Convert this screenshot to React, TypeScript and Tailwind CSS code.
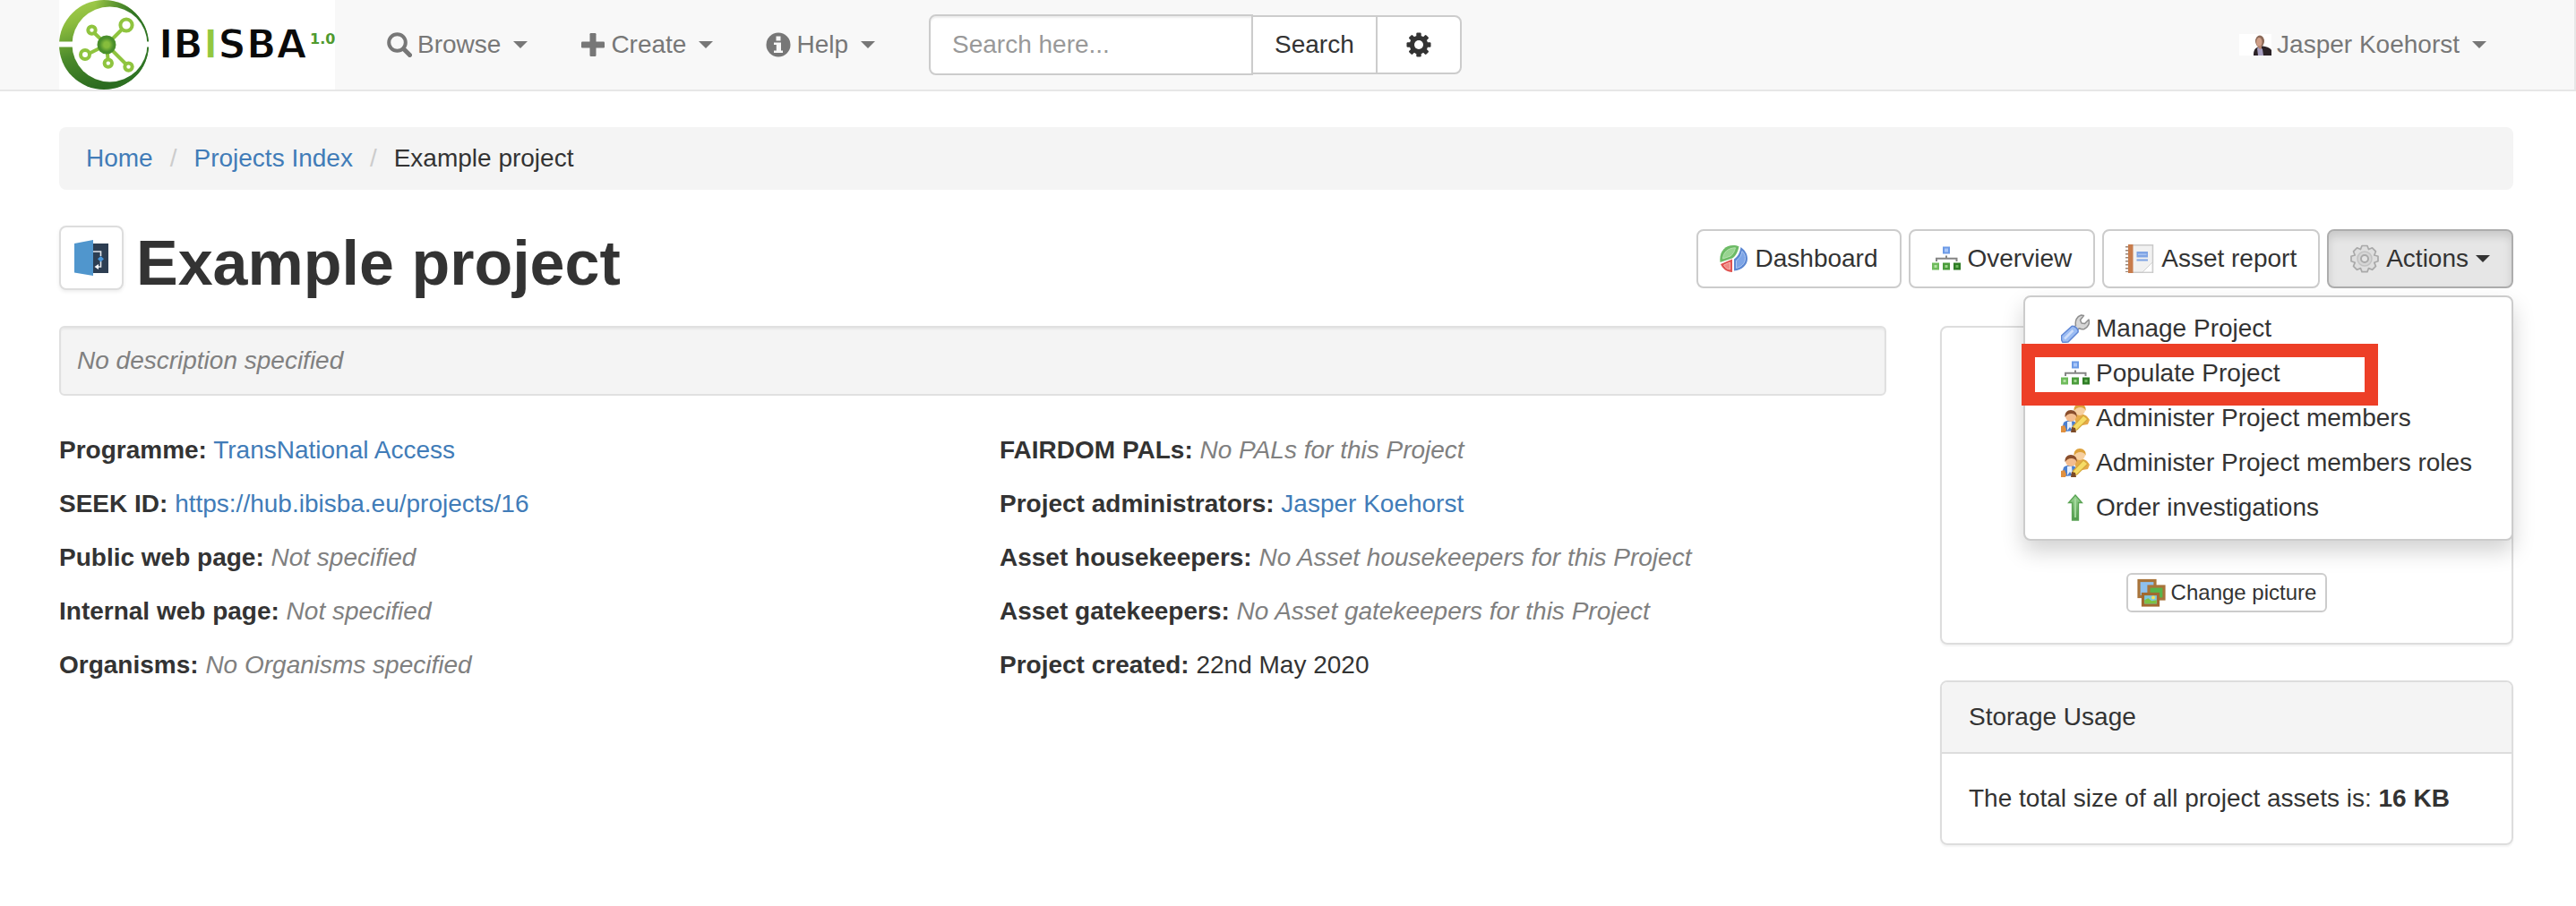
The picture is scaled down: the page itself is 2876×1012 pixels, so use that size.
import type { ReactNode } from "react";

function Caret({ className = "" }: { className?: string }) {
  return (
    <svg viewBox="0 0 16 8" className={`h-2 w-4 shrink-0 ${className}`} aria-hidden="true">
      <path d="M0 0h16L8 8z" fill="currentColor" />
    </svg>
  );
}

function Logo() {
  return (
    <svg viewBox="0 0 308 100" className="h-[100px] w-[308px]" role="img" aria-label="IBISBA 1.0">
      <defs>
        <linearGradient id="ring" x1="0.1" y1="0" x2="0.4" y2="1">
          <stop offset="0" stopColor="#a6cf4f" />
          <stop offset="0.25" stopColor="#8dbd3e" />
          <stop offset="0.6" stopColor="#4b8a2b" />
          <stop offset="1" stopColor="#2a6a1f" />
        </linearGradient>
        <linearGradient id="ringRight" x1="0" y1="0" x2="1" y2="0">
          <stop offset="0.4" stopColor="#2a6a1f" stopOpacity="0" />
          <stop offset="0.85" stopColor="#2f7424" />
        </linearGradient>
        <radialGradient id="hub">
          <stop offset="0.3" stopColor="#86bd3c" />
          <stop offset="0.75" stopColor="#4a8f2c" />
          <stop offset="1" stopColor="#4a8f2c" />
        </radialGradient>
      </defs>
      <rect width="308" height="100" fill="#fff" />
      <circle cx="50" cy="50" r="50" fill="url(#ring)" />
      <circle cx="50" cy="50" r="50" fill="url(#ringRight)" />
      <circle cx="56.5" cy="49.5" r="42" fill="#fff" />
      <rect y="46.5" width="102" height="6" fill="#fff" />
      <g stroke="#8fc43f" strokeWidth="4" fill="none">
        <path d="M53 50 70 33M53 50 39.500 37M53 50 33 60M53 50 54.500 66M53 50 74 71" />
        <circle cx="75" cy="28" r="6.600" fill="#fff" />
        <circle cx="36.500" cy="33.600" r="4.200" fill="#fff" />
        <circle cx="29" cy="61" r="5" fill="#fff" />
        <circle cx="54.800" cy="70.600" r="4.200" fill="#fff" />
        <circle cx="77.500" cy="74.600" r="4.200" fill="#fff" />
      </g>
      <circle cx="53" cy="50" r="10.500" fill="url(#hub)" />
      <text x="111" y="65" fontFamily="DejaVu Sans, sans-serif" fontWeight="700" fontSize="44" fill="#0a0a0a" stroke="#fff" strokeWidth="1.500">
        IB<tspan fill="#93c73f">I</tspan>SBA
      </text>
      <text x="280" y="49" fontFamily="DejaVu Sans, sans-serif" fontWeight="700" fontSize="16" fill="#4f9a2f">
        1.0
      </text>
    </svg>
  );
}

function SearchGlyph() {
  return (
    <svg viewBox="0 0 28 28" className="size-7 shrink-0" fill="none" stroke="currentColor" aria-hidden="true">
      <circle cx="11.500" cy="11.500" r="9.300" strokeWidth="4" />
      <path d="m18.500 18.500 7 7" strokeWidth="5" strokeLinecap="round" />
    </svg>
  );
}

function PlusGlyph() {
  return (
    <svg viewBox="0 0 28 28" className="size-7 shrink-0" fill="currentColor" aria-hidden="true">
      <rect x="1" y="10.500" width="26" height="7" rx="1.200" />
      <rect x="10.500" y="1" width="7" height="26" rx="1.200" />
    </svg>
  );
}

function InfoGlyph() {
  return (
    <svg viewBox="0 0 28 28" className="size-7 shrink-0" aria-hidden="true">
      <circle cx="14" cy="14" r="13.500" fill="currentColor" />
      <path d="M11.500 4.500h5v5h-5zM9 11.500h8v9h2v2.500H9v-2.500h2.800V14H9z" fill="#f8f8f8" />
    </svg>
  );
}

function CogGlyph() {
  return (
    <svg viewBox="0 0 28 28" className="size-7" aria-hidden="true">
      <g fill="#333">
        <rect x="11.300" y="0.500" width="5.400" height="27" rx="1.200" />
        <rect x="11.300" y="0.500" width="5.400" height="27" rx="1.200" transform="rotate(45 14 14)" />
        <rect x="11.300" y="0.500" width="5.400" height="27" rx="1.200" transform="rotate(90 14 14)" />
        <rect x="11.300" y="0.500" width="5.400" height="27" rx="1.200" transform="rotate(135 14 14)" />
        <circle cx="14" cy="14" r="10.300" />
      </g>
      <circle cx="14" cy="14" r="5" fill="#fff" />
    </svg>
  );
}

function Avatar() {
  return (
    <svg viewBox="0 0 36 24" className="h-6 w-9 shrink-0" aria-hidden="true">
      <rect width="36" height="24" fill="#fff" />
      <path d="M16 24c0-5 1-8 5-9.500l3-1.500 5 1c4 1 6 2 7 4v6z" fill="#2b2226" />
      <path d="M20 16l3-2 3 3 1 7h-6z" fill="#a79fc0" />
      <ellipse cx="23" cy="8" rx="5" ry="6.500" fill="#8d6a58" />
      <ellipse cx="22.300" cy="9" rx="3.200" ry="5" fill="#cf9f88" />
      <path d="M20 13h5v3l-2 1z" fill="#b98670" />
    </svg>
  );
}

function PieIcon() {
  return (
    <svg viewBox="0 0 32 32" className="size-8 shrink-0" aria-hidden="true">
      <path d="M.5 20C-1 8 6 1 15 1c2.500 0 4.500.4 6.500 1.300C20.500 8 18 13 14 15.500z" fill="#6dbb66" />
      <path d="M3.500 16C4 9 9 4 17.500 3.800 16.500 8 14.500 11.500 12 13z" fill="#98d490" stroke="#b5e2ae" strokeWidth="1" />
      <path d="M23.500 3c4 3 7.500 7 7.500 13 0 7-6 12.500-15 13.500V16.500C20.500 13.500 22.500 9 23.500 3z" fill="#5b87d2" />
      <path d="M25 7.500c3 3 3.800 6 3.300 9.500-.6 5-4.300 8-9.800 9.600V18C22.500 15 24.300 12 25 7.500z" fill="#7ea5e6" stroke="#abc6f2" strokeWidth="1" />
      <path d="M1 22l13-5.500V31C8 31 3 27 1 22z" fill="#e0524f" />
      <path d="M4.500 23 11.500 20v8C8 27.500 6 26 4.500 23z" fill="#f08a84" stroke="#f6b1ab" strokeWidth="1" />
    </svg>
  );
}

function TreeIcon() {
  return (
    <svg viewBox="0 0 32 32" className="size-8 shrink-0" aria-hidden="true">
      <rect x="12" y="2.500" width="8" height="8" fill="#6c9ae6" />
      <rect x="14" y="4.500" width="4" height="4" fill="#a8c6f8" />
      <path d="M16 12.500v3M5 19v-3.300h22.500V19" fill="none" stroke="#858585" strokeWidth="2" />
      <rect x="0" y="20.500" width="8" height="8" fill="#6fbb5c" />
      <rect x="2.500" y="23" width="3" height="3" fill="#b4e2a4" />
      <rect x="12" y="20.500" width="8" height="8" fill="#4b9c3c" />
      <rect x="14.500" y="23" width="3" height="3" fill="#9fd68e" />
      <rect x="24" y="20.500" width="8" height="8" fill="#2f7c26" />
      <rect x="26.500" y="23" width="3" height="3" fill="#6fb85f" />
    </svg>
  );
}

function ReportIcon() {
  return (
    <svg viewBox="0 0 32 32" className="size-8 shrink-0" aria-hidden="true">
      <rect x="5" y="0.800" width="25.500" height="30.500" fill="#f1f1f1" stroke="#c9c9c9" strokeWidth="1.500" />
      <path d="M19 31 30 20v11z" fill="#fff" stroke="#d2d2d2" />
      <rect x="3" y="0" width="5.500" height="32" fill="#c87c4c" />
      <path d="M1.500 2v29" stroke="#9a8577" strokeWidth="3" strokeDasharray="1.500 2.500" />
      <rect x="12.500" y="8" width="12.500" height="6.500" fill="#7fa4e4" />
      <path d="M14 11.200h9.500" stroke="#a9c4f2" strokeWidth="1.500" />
      <rect x="12.500" y="16.500" width="12.500" height="2" fill="#7fa4e4" />
    </svg>
  );
}

function GearIcon() {
  return (
    <svg viewBox="0 0 32 32" className="size-8 shrink-0" aria-hidden="true">
      <path
        d="M13 1.500h6l1.500 4 4-1.700 4 4-1.700 4.200 4.200 1.200v5.600l-4.200 1.500 1.700 4-4 4-4-1.700-1.500 4h-6l-1.500-4-4 1.700-4-4 1.700-4L1 18.800v-5.600L5.200 12 3.500 7.800l4-4 4 1.700z"
        fill="#dedede"
        stroke="#a9a9a9"
        strokeWidth="1.700"
        strokeLinejoin="round"
      />
      <circle cx="16" cy="16" r="8" fill="#d5d5d5" stroke="#c2c2c2" strokeWidth="1.500" />
      <circle cx="16" cy="16" r="4" fill="#e4e4e4" stroke="#a9a9a9" strokeWidth="2" />
    </svg>
  );
}

function WrenchIcon() {
  return (
    <svg viewBox="0 0 32 32" className="size-8 shrink-0" aria-hidden="true">
      <path
        d="M16.500 12.500c-1-5 1-10 6-11.500l3 .5-4 5 1.500 3.500 3.500.5 4.500-4.500c1.500 4-1 9-5 10.500-2 .6-4 .3-5.500-.8l-2 1.500-4-3z"
        fill="#d6d6d6"
        stroke="#8f8f8f"
        strokeWidth="1.500"
        strokeLinejoin="round"
      />
      <path d="M12 13.500c2.500-1.500 8 3 7 6.500L8 31l-6 .5-1.500-3V24z" fill="#9bbcf3" stroke="#5f86d4" strokeWidth="1.500" strokeLinejoin="round" />
      <path d="M13.500 18 4 27.500" stroke="#cfdffb" strokeWidth="2.500" />
    </svg>
  );
}

function MembersIcon() {
  return (
    <svg viewBox="0 0 32 32" className="size-8 shrink-0" aria-hidden="true">
      <path d="M14 14c2-3 12-3 15 0l3 4-2 5-12 2z" fill="#e6a94a" />
      <circle cx="21" cy="7" r="6" fill="#f7d0a0" />
      <path d="M14.500 8C14 3 17 0 21 0s7.500 3 6.500 8c-1-3-3-4-6-4s-5 1.500-7 4z" fill="#dda13b" />
      <path d="M3 21c3-3 12-3 14 1l-1 8-12 1-3-3z" fill="#4b7fd0" />
      <path d="M7 20h5l1 10-3-4-3 4z" fill="#e8f0fc" />
      <circle cx="11" cy="14" r="6" fill="#f3bd8f" />
      <path d="M4.500 15C4 10 7 7 11 7s7.500 3 6.500 8c-1-3-3-4-6-4s-5 1.500-7 4z" fill="#8a4e2c" />
      <path d="m25 13 5 4-12 12-5 1 .5-5z" fill="#f6dc66" stroke="#d5a63a" strokeWidth="1.200" />
      <path d="m0 25 4-1 2 5-1 3H0z" fill="#e0903f" />
      <path d="m12 26 4 1 1 5h-6z" fill="#7b4a26" />
    </svg>
  );
}

function UpArrowIcon() {
  return (
    <svg viewBox="0 0 32 32" className="size-8 shrink-0" aria-hidden="true">
      <defs>
        <linearGradient id="arrow" x1="0" y1="0" x2="0" y2="1">
          <stop offset="0" stopColor="#9ad493" />
          <stop offset="1" stopColor="#4f9a4b" />
        </linearGradient>
      </defs>
      <path d="m16 2 7.500 8.500h-4V30h-7V10.500h-4z" fill="url(#arrow)" stroke="#5aa354" strokeWidth="1.300" />
      <path d="M16 6v21" stroke="#a9dca2" strokeWidth="1.800" />
    </svg>
  );
}

function PicturesIcon() {
  return (
    <svg viewBox="0 0 32 32" className="size-8 shrink-0" aria-hidden="true">
      <rect x="2" y="2.500" width="18" height="18" fill="#8ec0ee" stroke="#a9743a" strokeWidth="3.200" />
      <rect x="13" y="9" width="17" height="14" fill="#58b34b" stroke="#a9743a" strokeWidth="3.200" />
      <rect x="6.500" y="17.500" width="17" height="12.500" fill="#7cc7dd" stroke="#a1692f" strokeWidth="3.200" />
      <path d="M8.300 28.200v-4l4-2 4 3 5.400-1v4z" fill="#7cc142" />
      <circle cx="18" cy="21.500" r="2" fill="#f6e05a" />
    </svg>
  );
}

function ProjectIcon() {
  return (
    <svg viewBox="0 0 38 40" className="h-10 w-[38px]" role="img" aria-label="Project">
      <path d="M20 4h18v33H20z" fill="#2d3e52" />
      <path d="M0 4 21 0v40L0 36.500z" fill="#5096cd" />
      <path d="M21 13h8.500v5M29.500 24v6H25" fill="none" stroke="#e3e8ed" strokeWidth="1.600" />
      <path d="m29.500 18 3.500 3.300-3.500 3.300-3.500-3.300z" fill="#4a98dc" />
      <path d="m22.500 30 4.500-3v6z" fill="#fff" />
    </svg>
  );
}

function NavItem({ icon, label }: { icon: ReactNode; label: string }) {
  return (
    <li>
      <button type="button" className="flex h-[100px] items-center">
        {icon}
        <span className="ml-1.5">{label}</span>
        <Caret className="ml-3.5" />
      </button>
    </li>
  );
}

const buttonClass = "flex h-[66px] items-center gap-2 rounded-lg border-2 px-6";

function ToolButton({ icon, label }: { icon: ReactNode; label: string }) {
  return (
    <button type="button" className={`${buttonClass} border-[#ccc] bg-white`}>
      {icon}
      {label}
    </button>
  );
}

const actions = [
  { label: "Manage Project", icon: <WrenchIcon /> },
  { label: "Populate Project", icon: <TreeIcon />, highlighted: true },
  { label: "Administer Project members", icon: <MembersIcon /> },
  { label: "Administer Project members roles", icon: <MembersIcon /> },
  { label: "Order investigations", icon: <UpArrowIcon /> },
];

function ActionsMenu() {
  return (
    <ul className="absolute top-full right-0 z-10 mt-2 min-w-[547px] rounded-lg border-2 border-[#ccc] bg-white py-2.5 shadow-[0_12px_24px_rgba(0,0,0,0.175)]">
      {actions.map((a) => (
        <li key={a.label} className="relative">
          <a href="#" className="flex h-[50px] items-center gap-[7px] px-10 whitespace-nowrap">
            {a.icon}
            {a.label}
          </a>
          {a.highlighted && (
            <span className="pointer-events-none absolute -top-2 -left-1 z-10 h-[69px] w-[398px] border-[15px] border-[#ed3f27]" />
          )}
        </li>
      ))}
    </ul>
  );
}

function Attribute({ label, children }: { label: string; children: ReactNode }) {
  return (
    <p>
      <b>{label}</b> {children}
    </p>
  );
}

function Empty({ children }: { children: ReactNode }) {
  return <em className="text-[#808080]">{children}</em>;
}

function Link({ children }: { children: ReactNode }) {
  return (
    <a href="#" className="text-[#417cb8]">
      {children}
    </a>
  );
}

export default function App() {
  return (
    <div className="min-h-screen bg-white font-['Liberation_Sans',Arial,sans-serif] text-[28px] leading-10 text-[#333]">
      <nav className="flex items-center border-r-2 border-b-2 border-[#e7e7e7] bg-[#f8f8f8] pr-[98px] pl-[66px] text-[#777]">
        <a href="#">
          <Logo />
        </a>
        <ul className="ml-[58px] flex gap-[59px]">
          <NavItem icon={<SearchGlyph />} label="Browse" />
          <NavItem icon={<PlusGlyph />} label="Create" />
          <NavItem icon={<InfoGlyph />} label="Help" />
        </ul>
        <form className="ml-[60px] flex items-center text-[#333]">
          <input
            type="text"
            aria-label="Search"
            placeholder="Search here..."
            className="h-[68px] w-[362px] rounded-l-lg border-2 border-[#ccc] bg-white px-6 shadow-[inset_0_2px_2px_rgba(0,0,0,0.075)] placeholder:text-[#999]"
          />
          <button type="button" className="-ml-0.5 h-[66px] border-2 border-[#ccc] bg-white px-6">
            Search
          </button>
          <button
            type="button"
            aria-label="Search options"
            className="-ml-0.5 flex h-[66px] w-24 items-center justify-center rounded-r-lg border-2 border-[#ccc] bg-white"
          >
            <CogGlyph />
          </button>
        </form>
        <button type="button" className="ml-auto flex h-[100px] items-center">
          <Avatar />
          <span className="ml-1.5">Jasper Koehorst</span>
          <Caret className="ml-3.5" />
        </button>
      </nav>

      <main className="px-[66px] pt-10 lg:pr-[70px]">
        <ol className="flex h-[70px] items-center rounded-lg bg-[#f4f4f4] px-[30px]">
          <li>
            <Link>Home</Link>
          </li>
          <li className="px-[19px] text-[#ccc]">/</li>
          <li>
            <Link>Projects Index</Link>
          </li>
          <li className="px-[19px] text-[#ccc]">/</li>
          <li>Example project</li>
        </ol>

        <header className="mt-10 flex h-28 items-start justify-between">
          <div className="flex items-start gap-3.5">
            <span className="flex size-[72px] items-center justify-center rounded-lg border-2 border-[#ddd] bg-white shadow-[0_2px_4px_rgba(0,0,0,0.075)]">
              <ProjectIcon />
            </span>
            <h1 className="pt-0.5 text-[70px] leading-[80px] font-bold">Example project</h1>
          </div>
          <div className="flex gap-2 pt-1">
            <ToolButton icon={<PieIcon />} label="Dashboard" />
            <ToolButton icon={<TreeIcon />} label="Overview" />
            <ToolButton icon={<ReportIcon />} label="Asset report" />
            <div className="relative">
              <button
                type="button"
                aria-expanded="true"
                className={`${buttonClass} border-[#adadad] bg-[#e6e6e6] shadow-[inset_0_6px_10px_rgba(0,0,0,0.125)]`}
              >
                <GearIcon />
                Actions
                <Caret />
              </button>
              <ActionsMenu />
            </div>
          </div>
        </header>

        <div className="grid grid-cols-12 gap-x-[60px]">
          <section className="col-span-9">
            <div className="rounded-md border-2 border-[#e0e0e0] bg-[#f4f4f4] px-[18px] py-[17px] shadow-[inset_0_2px_2px_rgba(0,0,0,0.05)]">
              <Empty>No description specified</Empty>
            </div>
            <div className="mt-[41px] grid grid-cols-2 gap-x-[60px]">
              <div className="flex flex-col gap-5">
                <Attribute label="Programme:">
                  <Link>TransNational Access</Link>
                </Attribute>
                <Attribute label="SEEK ID:">
                  <Link>https://hub.ibisba.eu/projects/16</Link>
                </Attribute>
                <Attribute label="Public web page:">
                  <Empty>Not specified</Empty>
                </Attribute>
                <Attribute label="Internal web page:">
                  <Empty>Not specified</Empty>
                </Attribute>
                <Attribute label="Organisms:">
                  <Empty>No Organisms specified</Empty>
                </Attribute>
              </div>
              <div className="flex flex-col gap-5">
                <Attribute label="FAIRDOM PALs:">
                  <Empty>No PALs for this Project</Empty>
                </Attribute>
                <Attribute label="Project administrators:">
                  <Link>Jasper Koehorst</Link>
                </Attribute>
                <Attribute label="Asset housekeepers:">
                  <Empty>No Asset housekeepers for this Project</Empty>
                </Attribute>
                <Attribute label="Asset gatekeepers:">
                  <Empty>No Asset gatekeepers for this Project</Empty>
                </Attribute>
                <Attribute label="Project created:">22nd May 2020</Attribute>
              </div>
            </div>
          </section>

          <aside className="col-span-3 flex flex-col gap-10">
            <div className="flex h-[356px] items-end justify-center rounded-lg border-2 border-[#ddd] pb-[34px] shadow-[0_2px_2px_rgba(0,0,0,0.05)]">
              <button type="button" className="flex h-11 items-center gap-1.5 rounded-md border-2 border-[#ccc] bg-white px-2.5 text-[24px] leading-9">
                <PicturesIcon />
                Change picture
              </button>
            </div>
            <div className="rounded-lg border-2 border-[#ddd] shadow-[0_2px_2px_rgba(0,0,0,0.05)]">
              <h2 className="rounded-t-md border-b-2 border-[#ddd] bg-[#f4f4f4] px-[30px] py-[19px]">Storage Usage</h2>
              <p className="p-[30px]">
                The total size of all project assets is: <b>16 KB</b>
              </p>
            </div>
          </aside>
        </div>
      </main>
    </div>
  );
}
